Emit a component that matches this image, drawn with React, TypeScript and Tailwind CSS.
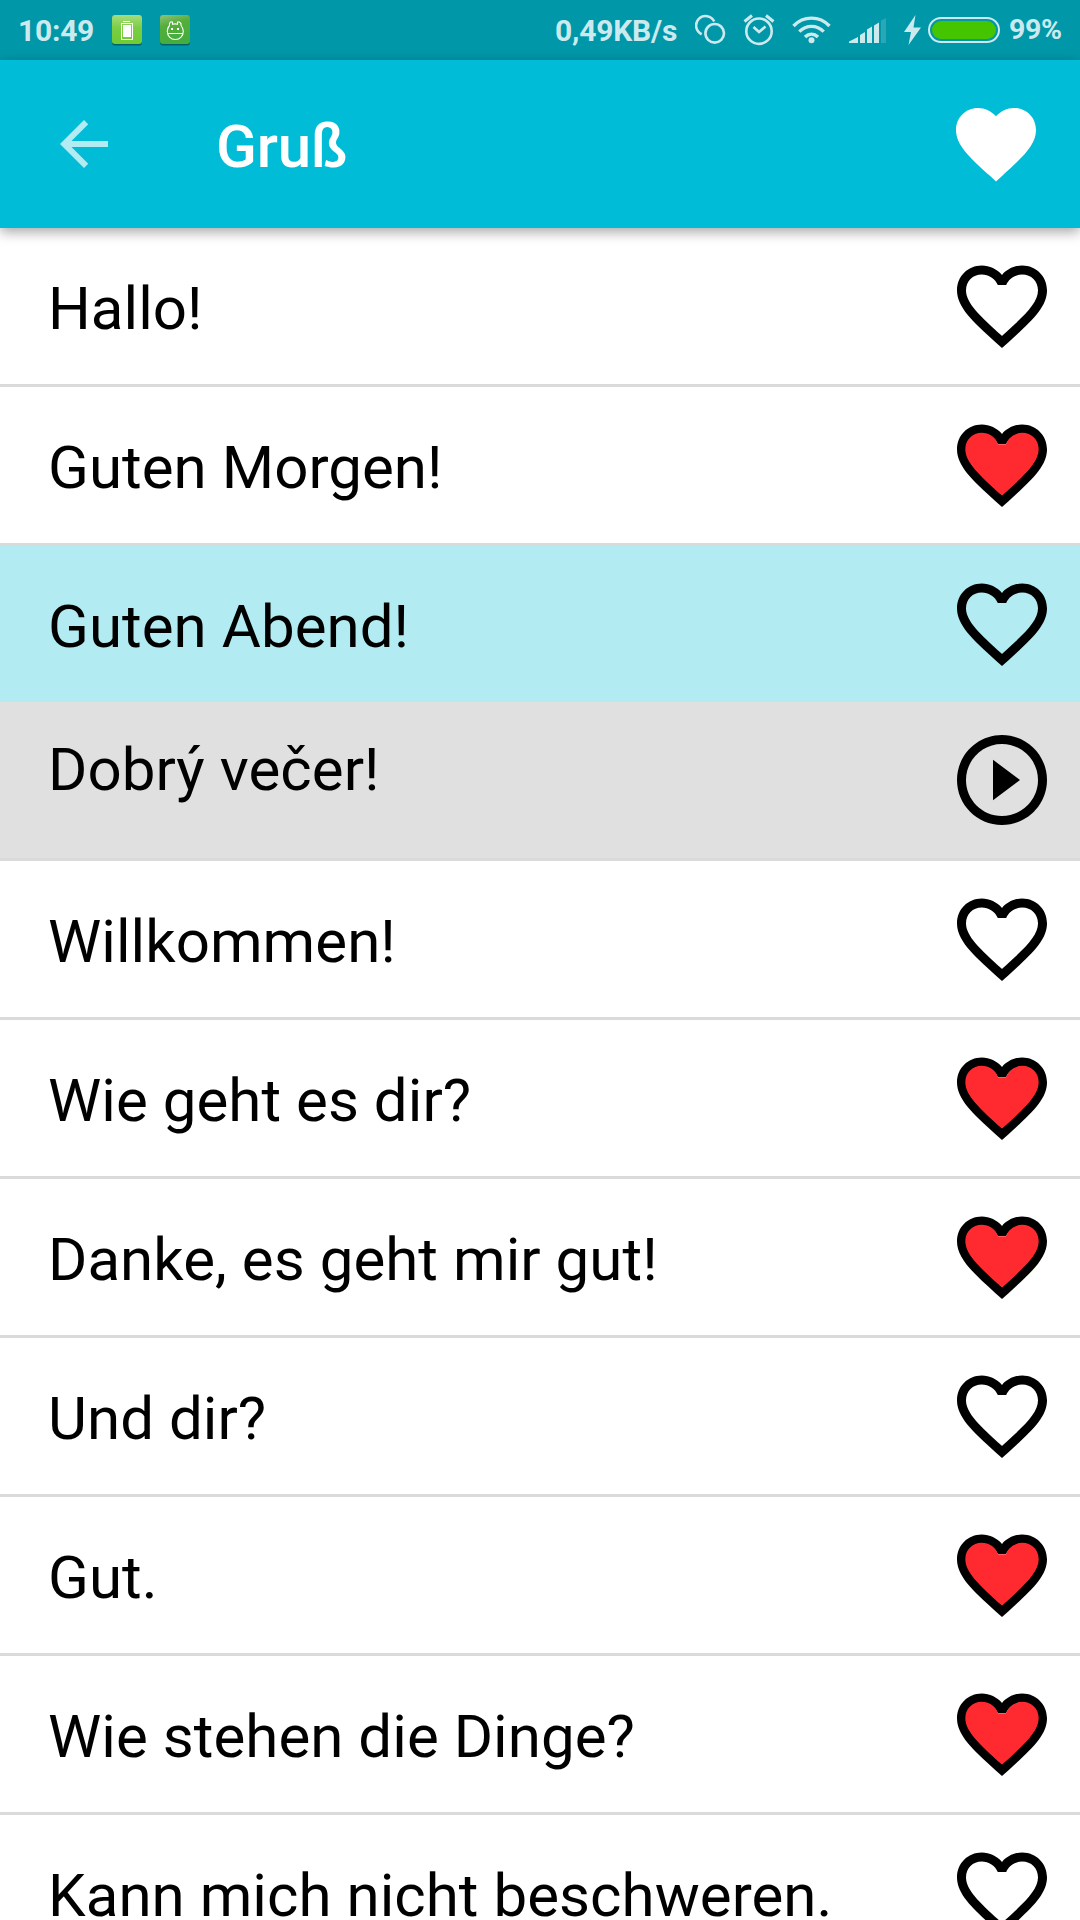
import React from "react";

type Entry = { text: string; kind: "empty" | "loved" | "play"; selected?: boolean };

const entries: Entry[] = [
  { text: "Hallo!", kind: "empty" },
  { text: "Guten Morgen!", kind: "loved" },
  { text: "Guten Abend!", kind: "empty", selected: true },
  { text: "Dobrý večer!", kind: "play" },
  { text: "Willkommen!", kind: "empty" },
  { text: "Wie geht es dir?", kind: "loved" },
  { text: "Danke, es geht mir gut!", kind: "loved" },
  { text: "Und dir?", kind: "empty" },
  { text: "Gut.", kind: "loved" },
  { text: "Wie stehen die Dinge?", kind: "loved" },
  { text: "Kann mich nicht beschweren.", kind: "empty" },
];

const HEART =
  "M12 21.35l-1.45-1.32C5.4 15.36 2 12.28 2 8.5 2 5.42 4.42 3 7.5 3c1.74 0 3.41.81 4.5 2.09C13.09 3.81 14.76 3 16.5 3 19.58 3 22 5.42 22 8.5c0 3.78-3.4 6.86-8.55 11.54L12 21.35z";
const HEART_BORDER =
  "M16.5 3c-1.74 0-3.41.81-4.5 2.09C10.91 3.81 9.24 3 7.5 3 4.42 3 2 5.42 2 8.5c0 3.78 3.4 6.86 8.55 11.54L12 21.35l1.45-1.32C18.6 15.36 22 12.28 22 8.5 22 5.42 19.58 3 16.5 3zm-4.4 15.55l-.1.1-.1-.1C7.14 14.24 4 11.39 4 8.5 4 6.5 5.5 5 7.5 5c1.54 0 3.04.99 3.57 2.36h1.87C13.46 5.99 14.96 5 16.5 5c2 0 3.5 1.5 3.5 3.5 0 2.89-3.14 5.74-7.9 10.05z";

function RowIcon({ kind }: { kind: Entry["kind"] }) {
  return (
    <svg viewBox="0 0 24 24" className="size-[108px] shrink-0">
      {kind === "play" ? (
        <path d="M10 16.5l6-4.5-6-4.5v9zM12 2C6.48 2 2 6.48 2 12s4.48 10 10 10 10-4.48 10-10S17.52 2 12 2zm0 18c-4.41 0-8-3.59-8-8s3.59-8 8-8 8 3.59 8 8-3.59 8-8 8z" />
      ) : (
        <>
          <path d={HEART_BORDER} />
          {kind === "loved" && (
            <path
              fill="#ff2a2f"
              d="M12 18.8C7 14.3 3.85 11.4 3.85 8.5c0-2.1 1.6-3.65 3.65-3.65 1.54 0 3.14 1 3.6 2.55h1.8c.5-1.55 2.06-2.55 3.6-2.55 2.05 0 3.65 1.55 3.65 3.65 0 2.9-3.15 5.8-8.15 10.3z"
            />
          )}
        </>
      )}
    </svg>
  );
}

function Row({ entry }: { entry: Entry }) {
  const play = entry.kind === "play";
  const bg = play ? "bg-[#e0e0e0]" : entry.selected ? "bg-[#b2ebf2]" : "bg-white";
  return (
    <li
      className={`flex shrink-0 justify-between pl-12 pr-6 pt-6 ${bg} ${
        entry.selected ? "h-[156px]" : "h-[159px] border-b-[3px] border-[#dadada]"
      }`}
    >
      <span
        className={`whitespace-nowrap text-[60px] leading-[71px] tracking-[0.05px] text-black ${
          play ? "pt-[8px]" : "pt-[21px]"
        }`}
      >
        {entry.text}
      </span>
      <RowIcon kind={entry.kind} />
    </li>
  );
}

function StatusBar() {
  return (
    <div className="flex h-[60px] shrink-0 items-center bg-[#0097a9] text-[30px] font-bold leading-[60px] text-[#cceaee]">
      <span className="ml-[18px] w-[94px] pt-px tracking-[-0.25px]">10:49</span>
      <svg viewBox="0 0 30 32" className="h-8 w-[30px]">
        <defs>
          <linearGradient id="lime" x1="0" y1="0" x2="0" y2="1">
            <stop offset="0" stopColor="#a6dc80" />
            <stop offset=".45" stopColor="#7ace42" />
            <stop offset="1" stopColor="#6ecb35" />
          </linearGradient>
        </defs>
        <rect x="0" y="1.5" width="30" height="30" rx="3" fill="#04606c" />
        <rect y="1" width="30" height="29" rx="3" fill="url(#lime)" />
        <path d="M11 7.5h7" stroke="#fff" />
        <rect x="9.5" y="9.5" width="11" height="16" fill="none" stroke="#fff" />
        <rect x="11" y="11" width="8" height="12" fill="#fff" />
      </svg>
      <svg viewBox="0 0 30 32" className="ml-[18px] h-8 w-[30px]">
        <defs>
          <linearGradient id="leaf" x1="0" y1="0" x2=".3" y2="1">
            <stop offset="0" stopColor="#8fc27b" />
            <stop offset=".4" stopColor="#55ae3b" />
            <stop offset="1" stopColor="#43ad3d" />
          </linearGradient>
        </defs>
        <rect x="0" y="1.5" width="30" height="30" rx="3" fill="#04606c" />
        <rect y="1" width="30" height="29" rx="3" fill="url(#leaf)" />
        <g fill="none" stroke="#fff" strokeWidth="1.1">
          <path d="M9.500 11.500V9.500l1-1.500h2v2.200c2-.5 3-.5 5 0V8h2l1.500 1.500v2c1.700 2 2.300 3.800 2.300 5.800 0 4.700-3.300 8.200-8 8.200s-8-3.500-8-8.200c0-2 .7-4.200 2.200-5.800zM7.500 19.500h15.600" />
        </g>
        <rect x="11" y="14" width="2" height="2" fill="#fff" />
        <rect x="17" y="14" width="2" height="2" fill="#fff" />
      </svg>
      <span className="ml-auto w-[140px] whitespace-nowrap pt-px tracking-[-0.2px]">0,49KB/s</span>
      <svg viewBox="0 0 32 32" className="h-8 w-8" fill="none" stroke="#cceaee" strokeWidth="2.600">
        <circle cx="19.700" cy="19.300" r="9.300" />
        <path d="M6.700 20.200A9.500 9.500 0 1 1 19.200 7.500" />
      </svg>
      <svg viewBox="0 0 32 32" className="ml-4 size-8" fill="none" stroke="#cceaee">
        <circle cx="16" cy="17.200" r="12.700" strokeWidth="2.600" />
        <path d="M10.500 13l5.500 5 6.500-5.500" strokeWidth="2.600" />
        <path d="M1.500 7.500L9 1.500M30.500 7.500L23 1.500" strokeWidth="3" />
      </svg>
      <svg viewBox="0 0 39 32" className="ml-[17px] h-8 w-[39px]" fill="none" stroke="#cceaee" strokeWidth="3.400">
        <path d="M1.500 12c10-10.500 26-10.500 36 0M7.300 17.600c7-7 17.400-7 24.400 0M13 23c4-3.800 9-3.800 13 0" />
        <circle cx="19.500" cy="26.300" r="3" fill="#cceaee" stroke="none" />
      </svg>
      <svg viewBox="0 0 38 26" className="ml-[18px] h-[26px] w-[38px]" fill="#cceaee">
        <path d="M0 26v-1.500l9-4.500v6zM11 26v-8l5-3v11zM18 26V12.500l5-3V26zM25 26V8.500l5-3V26z" />
        <path d="M32 26V3.500L37 1v25z" opacity=".2" />
      </svg>
      <svg viewBox="0 0 17 30" className="ml-[17px] h-[30px] w-[17px]" fill="#cceaee">
        <path d="M11.500 0L0 17h7L4.500 30 17 12.500H9.500z" />
      </svg>
      <div className="ml-[7px] h-[26px] w-[72px] rounded-full border-2 border-[#cceaee] p-[2px]">
        <div className="h-full rounded-full bg-[#45c400]" />
      </div>
      <span className="ml-[9px] mr-[18px] w-[53px] whitespace-nowrap text-[28.500px] tracking-[-0.4px]">
        99%
      </span>
    </div>
  );
}

export default function App() {
  return (
    <div className="flex h-[1920px] w-[1080px] flex-col overflow-hidden bg-white font-[Roboto,sans-serif]">
      <StatusBar />
      <header className="relative z-10 flex h-[168px] shrink-0 items-center bg-[#00bcd7] pl-12 pr-9 shadow-[0_4px_12px_rgba(0,0,0,0.35)]">
        <svg viewBox="0 0 24 24" className="size-[72px] opacity-70" fill="#fff">
          <path d="M20 11H7.830l5.590-5.590L12 4l-8 8 8 8 1.410-1.410L7.830 13H20v-2z" />
        </svg>
        <h1 className="ml-24 mt-[51px] self-start text-[60px] font-medium leading-[71px] tracking-[-0.2px] text-white">
          Gruß
        </h1>
        <svg viewBox="0 0 24 24" className="ml-auto size-24" fill="#fff">
          <path d={HEART} />
        </svg>
      </header>
      <ul className="flex flex-col">
        {entries.map((e) => (
          <Row key={e.text} entry={e} />
        ))}
      </ul>
    </div>
  );
}
